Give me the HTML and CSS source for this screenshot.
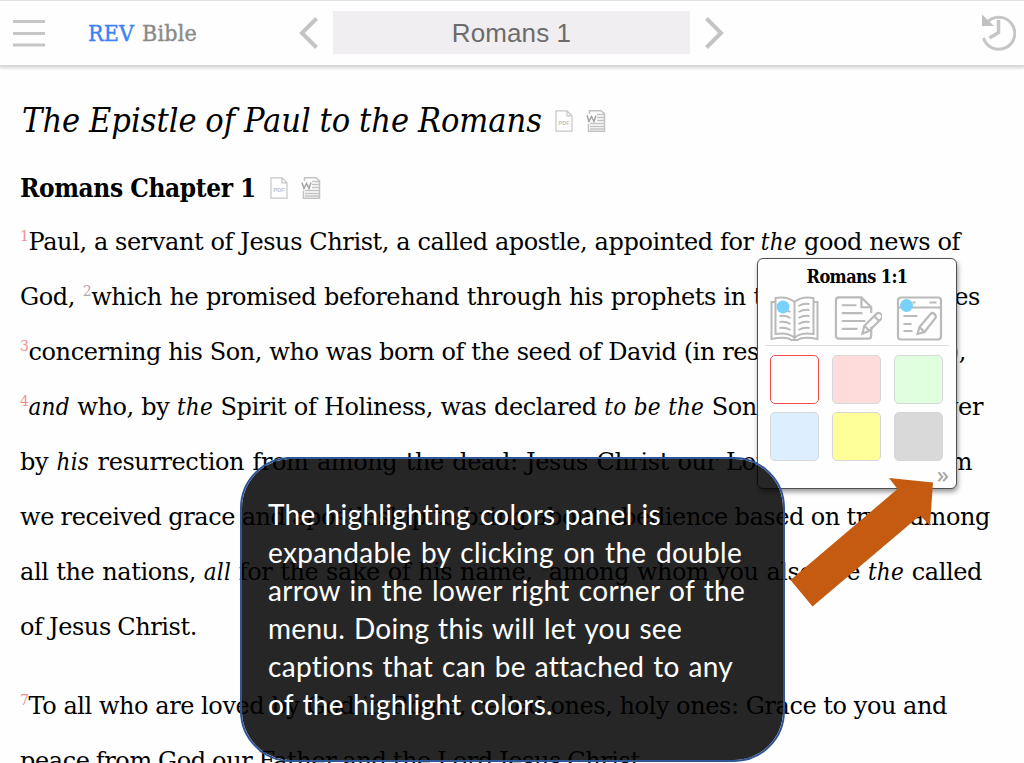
FILE: index.html
```
<!DOCTYPE html>
<html lang="en">
<head>
<meta charset="utf-8">
<title>REV Bible - Romans 1</title>
<link rel="stylesheet" href="styles.css">
</head>
<body>
<svg class="defs" aria-hidden="true">
  <symbol id="word" viewBox="0 0 20 22"><path d="M3.500 4V.8h11.500l3.500 3v17.400h-16V14M11 4.500h7M11 7.500h7M11 10.500h7M4 13.500h14M4 16.500h14M4 19h14" fill="none" stroke="#c2c2c2" stroke-width="1.500"/><path d="M1 5.500l2 6 2.500-5 2.500 5 2-6" fill="none" stroke="#a4a4a4" stroke-width="1.500"/></symbol>
</svg>
<div class="page">
  <header class="topbar">
    <svg class="menu" viewBox="0 0 32 28"><path d="M0 2.500h32M0 14.500h32M0 26h32" stroke="#c6c6c6" stroke-width="3"/></svg>
    <div class="brand"><span class="rev">REV</span><span>Bible</span></div>
    <svg class="chev" viewBox="0 0 20 32"><path d="M17.500 1.500L3 16l14.500 14.500" fill="none" stroke="#c4c4c4" stroke-width="4"/></svg>
    <div class="passage">Romans 1</div>
    <svg class="chev" viewBox="0 0 20 32"><path d="M2.500 1.500L17 16 2.500 30.500" fill="none" stroke="#c4c4c4" stroke-width="4"/></svg>
    <svg class="history" viewBox="0 0 36 38"><path d="M6.500 9A16 16 0 1 1 3.500 24" fill="none" stroke="#c6c6c6" stroke-width="3"/><path d="M2 .5v11.500h12z" fill="#c0c0c0"/><path d="M18.500 6v12.500L9.500 24" fill="none" stroke="#c6c6c6" stroke-width="3.500"/></svg>
  </header>
  <main class="reading">
    <h1 class="book"><span class="fit">The Epistle of Paul to the Romans</span><svg class="pdf" viewBox="0 0 18 22"><path d="M1 .8h11l5 5v15.400H1zM12 .8v5h5" fill="none" stroke="#c6c6c6" stroke-width="1.200"/><text x="9" y="15" text-anchor="middle" class="pdf-label">PDF</text></svg><svg class="word"><use href="#word"/></svg></h1>
    <h2 class="chapter"><span class="fit">Romans Chapter 1</span><svg class="pdf" viewBox="0 0 18 22"><path d="M1 .8h11l5 5v15.400H1zM12 .8v5h5" fill="none" stroke="#c6c6c6" stroke-width="1.200"/><text x="9" y="15" text-anchor="middle" class="pdf-label">PDF</text></svg><svg class="word"><use href="#word"/></svg></h2>
    <div class="verses">
      <p class="line l1"><sup>1</sup>Paul, a servant of Jesus Christ, a called apostle, appointed for <i>the</i> good news of</p>
      <p class="line l2">God, <sup class="dim">2</sup>which he promised beforehand through his prophets in the holy Scriptures</p>
      <p class="line l3"><sup>3</sup>concerning his Son, who was born of the seed of David (in respect to the flesh),</p>
      <p class="line l4"><sup>4</sup><i>and</i> who, by <i>the</i> Spirit of Holiness, was declared <i>to be the</i> Son of God with power</p>
      <p class="line l5">by <i>his</i> resurrection from among the dead: Jesus Christ our Lord, through whom</p>
      <p class="line l6">we received grace and apostleship to bring about obedience based on trust among</p>
      <p class="line l7">all the nations, <i>all</i> for the sake of his name, <sup class="dim">6</sup>among whom you also are <i>the</i> called</p>
      <p class="line l8">of Jesus Christ.</p>
    </div>
    <div class="verses">
      <p class="line l9"><sup>7</sup>To all who are loved by God in Rome, called ones, holy ones: Grace to you and</p>
      <p class="line l10">peace from God our Father and the Lord Jesus Christ.</p>
    </div>
  </main>

  <aside class="popup">
    <h3 class="popup-title">Romans 1:1</h3>
    <div class="tools">
      <svg viewBox="0 0 48 46" fill="none" stroke="#bababa" stroke-width="2"><path d="M24 6Q17 0 5 2v36q13-2 19 4 6-6 19-4V2Q31 0 24 6v36M5 6H1v37q15-3 20 1h6q5-4 20-1V6h-4"/><path d="M9 14q6-1 11 2M9 20q6-1 11 2M9 26q6-1 11 2M9 32q6-1 11 2M28 10q5-3 11-2M28 16q5-3 11-2M28 22q5-3 11-2M28 28q5-3 11-2M28 34q5-3 11-2"/><circle cx="12.500" cy="11" r="6.500" fill="#78d1fa" stroke="none"/></svg>
      <svg viewBox="-1 0 50 46" fill="none" stroke="#bababa" stroke-width="2.200"><path d="M38 17V11L28 1H5Q2 1 2 4v36q0 3 3 3h30q3 0 3-3V31M28 1v10h10M8 9h15M8 17h21M8 25h24M8 33h16"/><path d="M29 38l2-8 13-13q2-1 4 1t1 4L36 35zM31 30l5 5M41 20l5 5"/></svg>
      <svg viewBox="0 0 46 46" fill="none" stroke="#bababa" stroke-width="2.200"><rect x="1.500" y="1.500" width="43" height="42" rx="3"/><path d="M2 11.500h42M16 6.500h3M33 6.500h7M7 20h14M7 28h8M7 35h9"/><path d="M21 38l2-7 11-13q2-2 4 0t1 4L28 36zM23 31l5 5"/><circle cx="10" cy="9.500" r="6.500" fill="#78d1fa" stroke="none"/></svg>
    </div>
    <div class="swatches">
      <span class="sw none"></span><span class="sw pink"></span><span class="sw green"></span>
      <span class="sw blue"></span><span class="sw yellow"></span><span class="sw gray"></span>
    </div>
    <div class="expand">»</div>
  </aside>

  <div class="callout">
    <p class="say s1">The highlighting colors panel is</p>
    <p class="say s2">expandable by clicking on the double</p>
    <p class="say s3">arrow in the lower right corner of the</p>
    <p class="say s4">menu. Doing this will let you see</p>
    <p class="say s5">captions that can be attached to any</p>
    <p class="say s6">of the highlight colors.</p>
  </div>
  <svg class="arrow" viewBox="0 0 146 132"><path d="M99 3l44 4.500-3 43-10-10-107.500 91L.5 105 107.500 14z" fill="#c55a11"/></svg>
</div>
</body>
</html>
```
FILE: styles.css
```
* { box-sizing: border-box; }
body { margin: 0; background: #fefefe; color: #000; }
.defs { position: absolute; width: 0; height: 0; }
.page { position: relative; height: 763px; overflow: hidden; font-family: "DejaVu Serif Condensed", "DejaVu Serif", serif; }
.topbar { height: 67px; display: flex; align-items: center; padding: 0 8px 1px 13px; border-top: 1px solid #e2e2e2; border-bottom: 2px solid #d9d9d9; box-shadow: 0 2px 2px #e6e4e6; }
.menu { width: 32px; height: 28px; }
.brand { width: 109px; margin: 0 102px 0 43px; display: flex; justify-content: space-between; font-size: 23px; letter-spacing: .2px; color: #8a8a8a; -webkit-text-stroke: .4px; }
.rev { color: #3b82f6; }
.chev { width: 20px; height: 32px; flex: none; }
.passage { width: 357px; height: 43px; margin: 0 14px; background: #f0eef0; color: #6c6c6c; font: 26px/44px "Liberation Sans", Arial, sans-serif; text-align: center; letter-spacing: .1px; }
.history { width: 36px; height: 38px; margin-left: auto; }
.reading { padding: 0 20px; }
h1, h2, h3, p { margin: 0; }
.book, .chapter { display: flex; align-items: center; }
.fit { text-align-last: justify; white-space: nowrap; word-spacing: -4px; }
.book { height: 50px; margin-top: 29px; font-size: 34px; line-height: 48px; font-weight: 400; font-style: italic; }
.book .fit { width: 522px; margin-top: -2px; padding-left: 2px; }
.book .pdf { margin-left: 13px; }
.chapter { height: 42px; margin-top: 21px; font-size: 26px; letter-spacing: -.4px; }
.chapter .fit { width: 236px; }
.pdf { width: 18px; height: 22px; margin-left: 14px; }
.word { width: 20px; height: 22px; margin-left: 13px; }
.pdf-label { font: bold 5.500px "Liberation Sans", sans-serif; letter-spacing: 0; word-spacing: 0; fill: #c2c2c2; }
.verses { margin-top: 6px; font-family: "DejaVu Serif", serif; }
.verses i { font-family: "DejaVu Serif Condensed", "DejaVu Serif", serif; letter-spacing: .2px; }
.verses + .verses { margin-top: 24px; }
.line { height: 55px; font-size: 24px; line-height: 55px; white-space: nowrap; text-align-last: justify; letter-spacing: -.4px; word-spacing: -2.500px; }
.l1 { width: 940px; }
.l2 { width: 960px; }
.l3 { width: 946px; }
.l4 { width: 963px; }
.l5 { width: 952px; }
.l6 { width: 970px; }
.l7 { width: 962px; }
.l8 { width: 177px; }
.l9 { width: 927px; }
.l10 { width: 627px; }
sup { font-size: 14px; line-height: 0; vertical-align: 9px; color: #ef9292; }
.dim { color: #b8a5a5; }
.popup { position: absolute; left: 757px; top: 258px; width: 200px; height: 231px; padding: 6px 7px 0; background: #fefefe; border: 1px solid #505050; border-radius: 6px; box-shadow: 1px 3px 5px rgba(0,0,0,.4); }
.popup-title { font-size: 18px; line-height: 24px; text-align: center; letter-spacing: -.6px; }
.tools { display: flex; justify-content: space-between; height: 57px; padding: 7px 5px 0 5px; border-bottom: 1px solid #dedede; }
.tools svg { height: 46px; width: 49px; }
.swatches { display: grid; grid-template-columns: repeat(3, 49px); justify-content: space-between; row-gap: 8px; padding: 9px 6px 0 5px; }
.sw { height: 49px; border: 1px solid #d6d6d6; border-radius: 5px; }
.none { border-color: #f54b4b; }
.pink { background: #ffdcdc; }
.green { background: #dfffdf; }
.blue { background: #dceeff; }
.yellow { background: #ffff99; }
.gray { background: #d9d9d9; }
.expand { margin-top: -1px; text-align: right; font: 24px/28px "Noto Sans", sans-serif; color: #a5a5a5; }
.callout { position: absolute; left: 240px; top: 457px; width: 545px; height: 305px; padding: 37px 0 0 26px; border: 2px solid #2f5597; border-radius: 51px; background: rgba(0,0,0,.85); background-clip: padding-box; color: #fff; font-family: Lato, sans-serif; font-variant-ligatures: none; }
.say { font-size: 28px; line-height: 37.900px; letter-spacing: .3px; word-spacing: -2px; white-space: nowrap; text-align-last: justify; }
.s1 { width: 393px; }
.s2 { width: 474px; }
.s3 { width: 477px; }
.s4 { width: 414px; }
.s5 { width: 465px; }
.s6 { width: 285px; }
.arrow { position: absolute; left: 790px; top: 475px; width: 146px; height: 132px; }
```
